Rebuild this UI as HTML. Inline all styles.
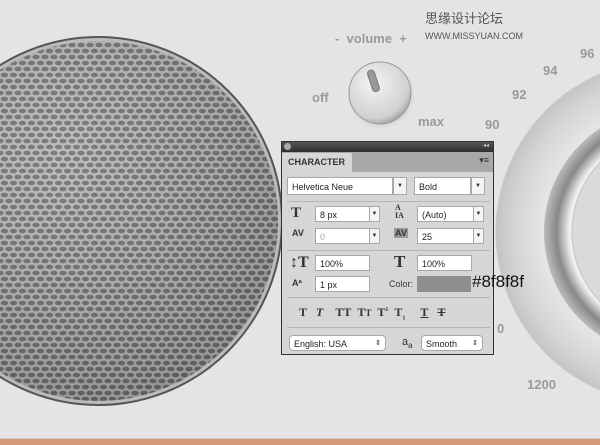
<!DOCTYPE html>
<html><head><style>
body{margin:0;width:600px;height:445px;overflow:hidden;position:relative;background:#e4e4e4;font-family:"Liberation Sans",sans-serif}
.a{position:absolute}
.lbl{color:#9a9a9a;font-weight:bold;font-size:13px}
.inp{position:absolute;background:#fff;border:1px solid #a8a8a8;height:16px;font-size:9px;line-height:16px;padding-left:4px;box-sizing:border-box;color:#222}
.dd{position:absolute;width:11px;height:16px;box-sizing:border-box;border:1px solid #a8a8a8;background:#f4f4f4;font-size:6px;text-align:center;line-height:15px;color:#333}
.sep{position:absolute;left:5px;width:203px;height:1px;background:#b5b5b5}
.ic{position:absolute;font-family:"Liberation Serif",serif;font-weight:bold;color:#333;font-size:12px}
</style></head><body>
<svg class="a" style="left:0;top:0" width="600" height="445">
<defs>
<pattern id="hex" width="9" height="12" patternUnits="userSpaceOnUse">
<rect width="9" height="12" fill="#b4b4b4"/>
<ellipse cx="4.5" cy="3" rx="3.6" ry="2.3" fill="#6c6c6c"/>
<ellipse cx="0" cy="9" rx="3.6" ry="2.3" fill="#6c6c6c"/>
<ellipse cx="9" cy="9" rx="3.6" ry="2.3" fill="#6c6c6c"/>
</pattern>
<radialGradient id="sh" cx="0.4" cy="0.3" r="0.8"><stop offset="0" stop-color="#fff" stop-opacity="0.12"/><stop offset="1" stop-color="#000" stop-opacity="0.2"/></radialGradient>
<radialGradient id="dial" cx="0.5" cy="0.5" r="0.5"><stop offset="0.7" stop-color="#e8e8e8"/><stop offset="0.9" stop-color="#d4d4d4"/><stop offset="1" stop-color="#c4c4c4"/></radialGradient>
<radialGradient id="ring" cx="0.5" cy="0.5" r="0.5"><stop offset="0.8" stop-color="#eee"/><stop offset="0.9" stop-color="#888"/><stop offset="1" stop-color="#bbb"/></radialGradient>
<radialGradient id="knob" cx="0.4" cy="0.35" r="0.7"><stop offset="0" stop-color="#f4f4f4"/><stop offset="0.8" stop-color="#d0d0d0"/><stop offset="1" stop-color="#999"/></radialGradient>
</defs>
<circle cx="98" cy="221" r="184" fill="#bbb" stroke="#555" stroke-width="2"/>
<circle cx="98" cy="221" r="180" fill="url(#hex)"/>
<circle cx="98" cy="221" r="180" fill="url(#sh)"/>
<circle cx="668" cy="232" r="172" fill="url(#dial)" stroke="#c8c8c8"/>
<circle cx="668" cy="232" r="124" fill="url(#ring)"/>
<circle cx="672" cy="232" r="100" fill="#dadada" stroke="#c4c4c4"/>
<circle cx="381" cy="95" r="33" fill="#d8d8d8" opacity="0.6"/>
<circle cx="380" cy="93" r="31" fill="url(#knob)" stroke="#999"/>
<rect x="370" y="70" width="7" height="22" rx="3" fill="#999" stroke="#777" transform="rotate(-18 373 81)"/>
<rect x="0" y="439" width="600" height="6" fill="#d49a7a"/>
<rect x="0" y="438" width="600" height="1" fill="#c9c9c9"/>
</svg>
<div class="a lbl" style="left:335px;top:31px">- &nbsp;volume &nbsp;+</div>
<div class="a lbl" style="left:312px;top:90px">off</div>
<div class="a lbl" style="left:418px;top:114px">max</div>
<div class="a lbl" style="left:485px;top:117px">90</div>
<div class="a lbl" style="left:512px;top:87px">92</div>
<div class="a lbl" style="left:543px;top:63px">94</div>
<div class="a lbl" style="left:580px;top:46px">96</div>
<div class="a lbl" style="left:527px;top:377px">1200</div>
<div class="a lbl" style="left:497px;top:321px">0</div>
<div class="a" style="left:425px;top:8px;font-size:13px;color:#555;font-family:'Liberation Sans','Noto Sans CJK SC',sans-serif">思缘设计论坛 <span style="font-size:9px">WWW.MISSYUAN.COM</span></div>
<div class="a" style="left:281px;top:141px;width:213px;height:214px;background:#d6d6d6;border:1px solid #333;box-sizing:border-box">
<div class="a" style="left:0;top:0;width:211px;height:10px;background:linear-gradient(#555,#2e2e2e)"></div>
<div class="a" style="left:2px;top:1px;width:7px;height:7px;border-radius:50%;background:#aaa"></div>
<div class="a" style="right:4px;top:0;font-size:6px;color:#ccc">◂◂</div>
<div class="a" style="left:0;top:10px;width:211px;height:20px;background:#a8a8a8"></div>
<div class="a" style="left:0;top:11px;width:70px;height:19px;background:#d6d6d6;font-size:9px;font-weight:bold;color:#333;line-height:19px;padding-left:6px;box-sizing:border-box">CHARACTER</div>
<div class="a" style="right:4px;top:13px;font-size:9px;color:#333">▾≡</div>
<div class="inp" style="left:5px;top:35px;width:106px;height:18px;line-height:18px">Helvetica Neue</div>
<div class="dd" style="left:111px;top:35px;width:14px;height:18px;line-height:17px">▼</div>
<div class="inp" style="left:132px;top:35px;width:57px;height:18px;line-height:18px">Bold</div>
<div class="dd" style="left:189px;top:35px;width:14px;height:18px;line-height:17px">▼</div>
<div class="sep" style="top:59px"></div>
<div class="ic" style="left:9px;top:63px;font-size:15px">T</div>
<div class="inp" style="left:33px;top:64px;width:55px">8 px</div><div class="dd" style="left:87px;top:64px">▼</div>
<div class="ic" style="left:113px;top:62px;font-size:8px;line-height:8px">A<br>IA</div>
<div class="inp" style="left:135px;top:64px;width:57px">(Auto)</div><div class="dd" style="left:191px;top:64px">▼</div>
<div class="ic" style="left:10px;top:86px;font-size:9px;font-family:'Liberation Sans'">AV</div>
<div class="inp" style="left:33px;top:86px;width:55px;color:#aaa">0</div><div class="dd" style="left:87px;top:86px">▼</div>
<div class="ic" style="left:112px;top:86px;font-size:9px;font-family:'Liberation Sans';background:#999;padding:0 1px">AV</div>
<div class="inp" style="left:135px;top:86px;width:57px">25</div><div class="dd" style="left:191px;top:86px">▼</div>
<div class="sep" style="top:108px"></div>
<div class="ic" style="left:8px;top:112px;font-size:16px">↕T</div>
<div class="inp" style="left:33px;top:113px;width:55px">100%</div>
<div class="ic" style="left:112px;top:110px;font-size:17px">T</div>
<div class="inp" style="left:135px;top:113px;width:55px">100%</div>
<div class="ic" style="left:10px;top:136px;font-size:9px;font-family:'Liberation Sans'">Aª</div>
<div class="inp" style="left:33px;top:134px;width:55px">1 px</div>
<div class="a" style="left:107px;top:137px;font-size:9px;color:#333">Color:</div>
<div class="a" style="left:135px;top:134px;width:54px;height:16px;background:#8f8f8f"></div>
<div class="sep" style="top:155px"></div>
<div class="ic" style="left:17px;top:163px">T&nbsp;&nbsp;&nbsp;<i>T</i>&nbsp;&nbsp;&nbsp;&nbsp;TT&nbsp;&nbsp;T<span style="font-size:9px">T</span>&nbsp;&nbsp;T<sup style="font-size:6px">1</sup>&nbsp;&nbsp;T<sub style="font-size:6px">1</sub>&nbsp;&nbsp;&nbsp;&nbsp;&nbsp;<u>T</u>&nbsp;&nbsp;&nbsp;<s>T</s></div>
<div class="sep" style="top:185px"></div>
<div class="inp" style="left:7px;top:193px;width:97px;height:16px;border-radius:4px;font-size:9px">English: USA<span style="float:right;padding-right:4px;font-size:7px">⇕</span></div>
<div class="a" style="left:120px;top:194px;font-size:11px;color:#333">a<sub style="font-size:8px">a</sub></div>
<div class="inp" style="left:139px;top:193px;width:62px;height:16px;border-radius:4px">Smooth<span style="float:right;padding-right:4px;font-size:7px">⇕</span></div>
</div>
<div class="a" style="left:472px;top:272px;font-size:17px;color:#111">#8f8f8f</div>
</body></html>
